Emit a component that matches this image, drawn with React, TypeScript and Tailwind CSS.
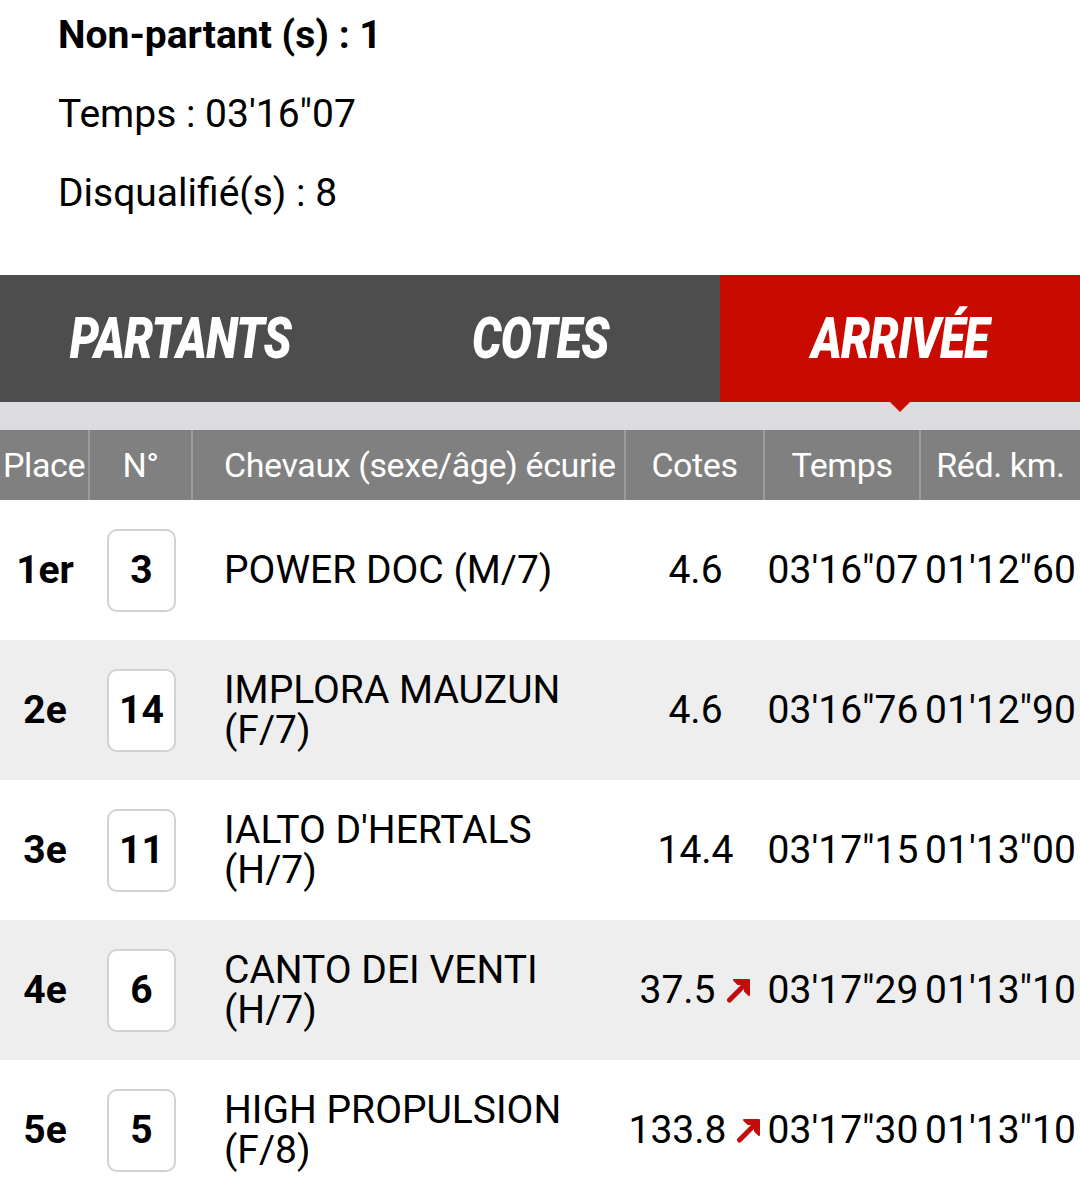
import type { ReactNode } from 'react'

interface Runner {
    place: string;
    num: number;
    name: string;
    cote: string;
    up?: boolean;
    time: string;
    red: string;
}

const runners: Runner[] = [
    { place: "1er", num: 3, name: "POWER DOC (M/7)", cote: "4.6", time: "03'16\"07", red: "01'12\"60" },
    { place: "2e", num: 14, name: "IMPLORA MAUZUN (F/7)", cote: "4.6", time: "03'16\"76", red: "01'12\"90" },
    { place: "3e", num: 11, name: "IALTO D'HERTALS (H/7)", cote: "14.4", time: "03'17\"15", red: "01'13\"00" },
    { place: "4e", num: 6, name: "CANTO DEI VENTI (H/7)", cote: "37.5", up: true, time: "03'17\"29", red: "01'13\"10" },
    { place: "5e", num: 5, name: "HIGH PROPULSION (F/8)", cote: "133.8", up: true, time: "03'17\"30", red: "01'13\"10" },
];

function UpArrow() {
    return (
        <svg width="26" height="26" viewBox="0 0 26 26" className="shrink-0 ml-[10px]">
            <path d="M3.5 23 L17 9.5" stroke="#c30d0d" strokeWidth="5" strokeLinecap="round" />
            <path d="M8 3 H23 V18 L19 14 V7 H12 Z" fill="#c30d0d" stroke="#c30d0d" strokeWidth="2" strokeLinejoin="round" />
        </svg>
    );
}

function HeadCell({ children, className = "" }: { children: ReactNode; className?: string }) {
    return (
        <div className={`flex items-center h-full whitespace-nowrap overflow-hidden border-r-2 border-[#9c9c9c] last:border-r-0 ${className}`}>
            {children}
        </div>
    );
}

export default function App() {
    const tabs = ["PARTANTS", "COTES", "ARRIVÉE"];

    return (
        <div className="w-[1080px] h-[1196px] overflow-hidden bg-white text-black" style={{ fontFamily: 'Roboto, "Noto Sans", sans-serif' }}>
            {/* infos course */}
            <div className="pl-[58px] pt-[13px] flex flex-col gap-[35px] text-[39px] leading-[44px]">
                <p className="font-bold">Non-partant (s) : 1</p>
                <p>Temps : 03'16"07</p>
                <p>Disqualifié(s) : 8</p>
            </div>

            {/* onglets */}
            <div className="mt-[60px] grid grid-cols-3 h-[127px] bg-[#4d4d4d]">
                {tabs.map((tab, i) => (
                    <div key={tab} className={`flex items-center justify-center ${i === 2 ? "bg-[#c80a00]" : ""}`}>
                        <span className="text-white text-[58px] font-black italic tracking-[-1px] scale-x-[0.8] inline-block">{tab}</span>
                    </div>
                ))}
            </div>
            <div className="relative h-[28px] bg-[#dcdce0]">
                <div className="absolute left-[890px] top-0 w-0 h-0 border-l-[10px] border-r-[10px] border-t-[10px] border-l-transparent border-r-transparent border-t-[#c80a00]" />
            </div>

            {/* en-tête tableau */}
            <div className="grid grid-cols-[90px_103px_433px_139px_156px_159px] h-[70px] bg-[#808080] text-white text-[34px] tracking-[-0.4px]">
                <HeadCell className="justify-center">Place</HeadCell>
                <HeadCell className="justify-center">N°</HeadCell>
                <HeadCell className="pl-[31px]">Chevaux (sexe/âge) écurie</HeadCell>
                <HeadCell className="justify-center">Cotes</HeadCell>
                <HeadCell className="justify-center">Temps</HeadCell>
                <HeadCell className="justify-center">Réd. km.</HeadCell>
            </div>

            {/* lignes */}
            {runners.map((r, i) => (
                <div key={r.num} className={`grid grid-cols-[90px_103px_433px_139px_156px_159px] h-[140px] items-center text-[39px] ${i % 2 === 1 ? "bg-[#eeeeee]" : "bg-white"}`}>
                    <div className="text-center font-bold text-[39px]">{r.place}</div>
                    <div className="flex justify-center">
                        <div className="w-[69px] h-[83px] rounded-[10px] border-2 border-[#d2d2d2] bg-white flex items-center justify-center font-bold text-[39px]">{r.num}</div>
                    </div>
                    <div className="pl-[31px] pr-[20px] leading-[40px]">{r.name}</div>
                    <div className="flex items-center justify-center">
                        <span>{r.cote}</span>
                        {r.up && <UpArrow />}
                    </div>
                    <div className="text-center">{r.time}</div>
                    <div className="text-center">{r.red}</div>
                </div>
            ))}
        </div>
    );
}
